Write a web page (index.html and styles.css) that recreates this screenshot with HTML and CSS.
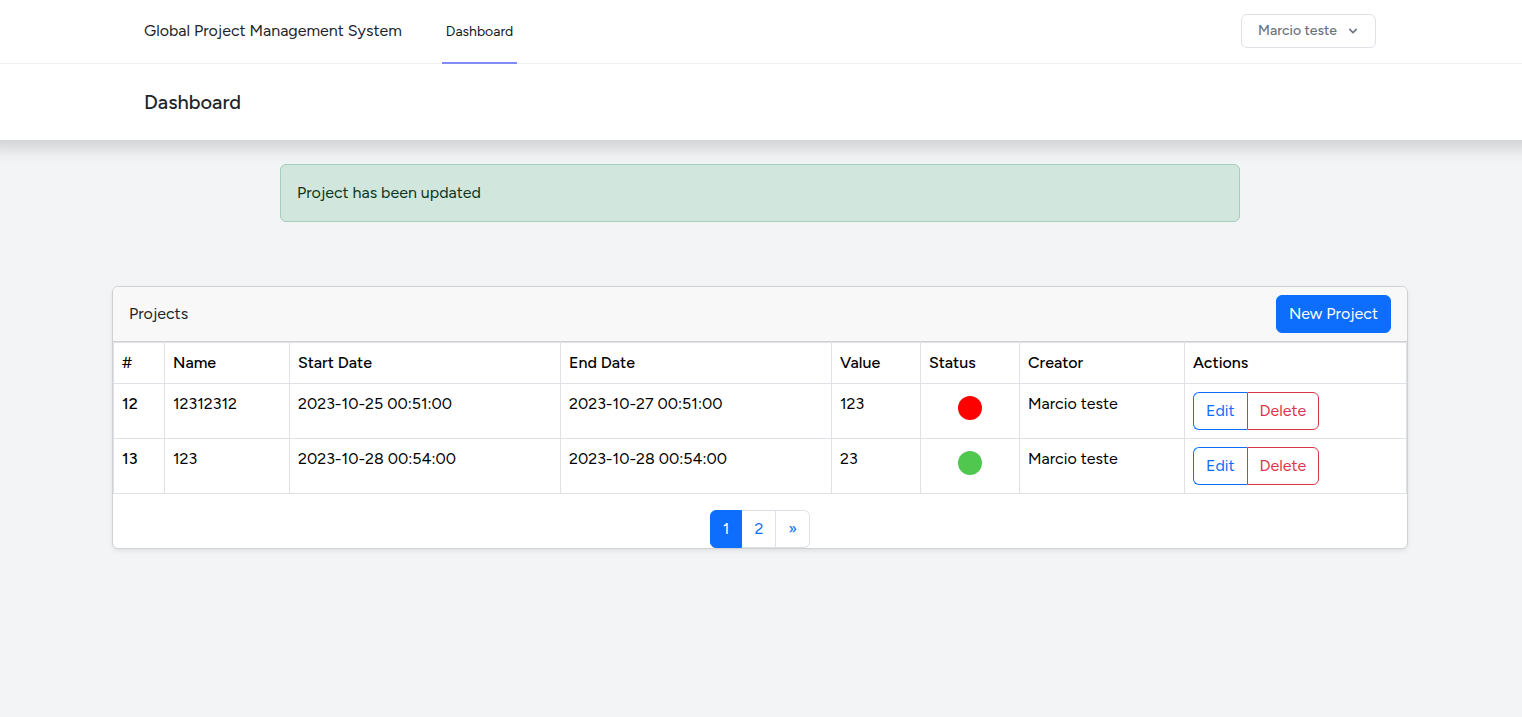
FILE: index.html
```html
<!DOCTYPE html>
<html lang="en">
<head>
<meta charset="utf-8">
<meta name="viewport" content="width=device-width, initial-scale=1">
<title>Global Project Management System</title>
<link rel="stylesheet" href="styles.css">
</head>
<body>
<nav class="navbar">
  <div class="nav-left">
    <a class="brand" href="#">Global Project Management System</a>
    <a class="nav-link" href="#" aria-current="page">Dashboard</a>
  </div>
  <button class="user-menu" type="button">Marcio teste
    <svg class="chevron" viewBox="0 0 20 20" fill="currentColor" aria-hidden="true"><path fill-rule="evenodd" d="M5.293 7.293a1 1 0 011.414 0L10 10.586l3.293-3.293a1 1 0 111.414 1.414l-4 4a1 1 0 01-1.414 0l-4-4a1 1 0 010-1.414z" clip-rule="evenodd"/></svg>
  </button>
</nav>
<header class="page-header"><h1 class="page-title">Dashboard</h1></header>
<main class="content">
  <div class="alert" role="alert">Project has been updated</div>
  <section class="card">
    <div class="card-header">
      <h2 class="card-title">Projects</h2>
      <a class="btn btn-primary" href="#">New Project</a>
    </div>
    <table class="table">
      <colgroup>
        <col class="col-id"><col class="col-name"><col class="col-date"><col class="col-date"><col class="col-value"><col class="col-status"><col class="col-creator"><col>
      </colgroup>
      <thead>
        <tr><th scope="col">#</th><th scope="col">Name</th><th scope="col">Start Date</th><th scope="col">End Date</th><th scope="col">Value</th><th scope="col">Status</th><th scope="col">Creator</th><th scope="col">Actions</th></tr>
      </thead>
      <tbody>
        <tr>
          <th scope="row">12</th><td>12312312</td><td>2023-10-25 00:51:00</td><td>2023-10-27 00:51:00</td><td>123</td>
          <td><span class="dot dot-red" role="img" aria-label="Late"></span></td><td>Marcio teste</td>
          <td><div class="btn-group"><button class="btn btn-edit" type="button">Edit</button><button class="btn btn-delete" type="button">Delete</button></div></td>
        </tr>
        <tr>
          <th scope="row">13</th><td>123</td><td>2023-10-28 00:54:00</td><td>2023-10-28 00:54:00</td><td>23</td>
          <td><span class="dot dot-green" role="img" aria-label="On time"></span></td><td>Marcio teste</td>
          <td><div class="btn-group"><button class="btn btn-edit" type="button">Edit</button><button class="btn btn-delete" type="button">Delete</button></div></td>
        </tr>
      </tbody>
    </table>
    <div class="pagination">
      <a class="page active" href="#" aria-current="page">1</a>
      <a class="page" href="#">2</a>
      <a class="page" href="#" aria-label="Next">»</a>
    </div>
  </section>
</main>
</body>
</html>
```
FILE: styles.css
```css
* { box-sizing: border-box; }
body {
  margin: 0;
  min-height: 100vh;
  background: #f3f4f6;
  color: #212529;
  font-family: Figtree, Inter, "Open Sans", sans-serif;
  font-size: 16px;
  font-weight: 400;
  line-height: 24px;
}
a { color: inherit; text-decoration: none; }
button { font: inherit; cursor: pointer; }
h1, h2 { margin: 0; }

.navbar {
  display: flex;
  justify-content: space-between;
  align-items: flex-start;
  min-height: 64px;
  padding: 0 146px 0 144px;
  background: #fff;
  border-bottom: 1px solid #f0f1f3;
}
.nav-left { display: flex; gap: 40px; margin-bottom: -1px; }
.brand { padding-top: 19px; }
.nav-link {
  height: 64px;
  padding: 20px 4px 0;
  border-bottom: 2px solid #818cf8;
  color: #111827;
  font-size: 14px;
}
.user-menu {
  display: flex;
  align-items: center;
  gap: 8px;
  height: 34px;
  margin-top: 14px;
  padding: 0 14px 0 16px;
  border: 1px solid #dee2e6;
  border-radius: 6px;
  background: #fff;
  color: #6b7280;
  font-size: 14px;
  font-weight: 500;
}
.chevron { width: 16px; height: 16px; }

.page-header {
  padding: 26px 146px 26px 144px;
  background: #fff;
  box-shadow: 0 -8px 16px 16px rgba(0, 0, 0, 0.15);
  clip-path: inset(0 0 -32px 0);
}
.page-title { font-size: 20px; line-height: 24px; font-weight: 500; }

.content { padding: 24px 114px 24px 112px; }
.alert {
  max-width: 960px;
  margin: 0 auto 64px;
  padding: 16px;
  border: 1px solid #a3cfbb;
  border-radius: 6px;
  background: #d1e7dd;
  color: #0a3622;
  position: relative;
}
.card {
  border: 1px solid #d0d1d3;
  border-radius: 6px;
  background: #fff;
  box-shadow: 0 2px 4px rgba(0, 0, 0, 0.08);
}
.card-header {
  display: flex;
  justify-content: space-between;
  align-items: center;
  padding: 8px 16px;
  border-bottom: 1px solid #d0d1d3;
  border-radius: 5px 5px 0 0;
  background: #f8f8f8;
}
.card-title { font-size: 16px; line-height: 24px; font-weight: 400; }

.btn {
  display: inline-block;
  padding: 6px 12px;
  border: 1px solid;
  border-radius: 6px;
  background: transparent;
}
.btn-primary { border-color: #0d6efd; background: #0d6efd; color: #fff; }
.btn-group { display: flex; }
.btn-edit { border-color: #0d6efd; border-right: 0; border-radius: 6px 0 0 6px; color: #0d6efd; }
.btn-delete { border-color: #dc3545; border-radius: 0 6px 6px 0; color: #dc3545; }

.table { width: 100%; border-collapse: collapse; color: #000; }
.table th, .table td {
  padding: 8px;
  border: 1px solid #dee2e6;
  text-align: left;
  vertical-align: top;
}
.table th { font-weight: 500; }
.col-id { width: 51px; }
.col-name { width: 125px; }
.col-date { width: 271px; }
.col-value { width: 89px; }
.col-status { width: 99px; }
.col-creator { width: 165px; }
.dot { display: block; width: 24px; height: 24px; margin: 4px auto 0; border-radius: 50%; }
.dot-red { background: #f00; }
.dot-green { background: #50c850; }

.pagination { display: flex; justify-content: center; margin-top: 16px; }
.page {
  padding: 6px 12px;
  border: 1px solid #dee2e6;
  border-left: 0;
  color: #0d6efd;
}
.page:first-child { border-left: 1px solid #dee2e6; border-radius: 6px 0 0 6px; }
.page:last-child { border-radius: 0 6px 6px 0; }
.page.active { border-color: #0d6efd; background: #0d6efd; color: #fff; }
```
